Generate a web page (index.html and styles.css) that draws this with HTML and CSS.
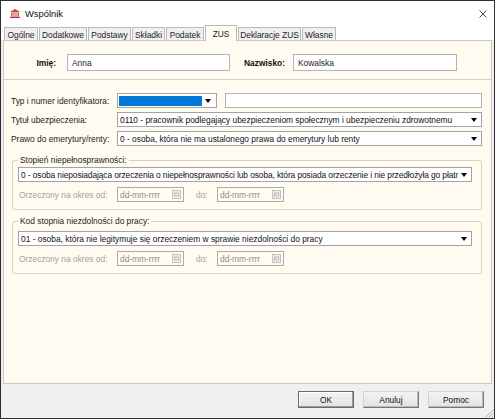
FILE: index.html
```html
<!DOCTYPE html>
<html lang="pl">
<head>
<meta charset="utf-8">
<title>Wspólnik</title>
<link rel="stylesheet" href="styles.css">
</head>
<body>
<div class="window">
  <div class="titlebar">
    <svg class="appicon" viewBox="0 0 10 9" width="10" height="9">
      <path d="M5 0 L10 3 L0 3 Z" fill="#c8473e"/>
      <rect x="1" y="3.5" width="8" height="4" fill="#d9605a"/>
      <rect x="2.5" y="4.2" width="1.2" height="3" fill="#f6d2cf"/>
      <rect x="4.4" y="4.2" width="1.2" height="3" fill="#f6d2cf"/>
      <rect x="6.3" y="4.2" width="1.2" height="3" fill="#f6d2cf"/>
      <rect x="0" y="7.8" width="10" height="1.2" fill="#a83a33"/>
    </svg>
    <span class="title">Wspólnik</span>
    <svg class="close" viewBox="0 0 8 8" width="8" height="8">
      <path d="M0.5 0.5 L7.5 7.5 M7.5 0.5 L0.5 7.5" stroke="#333" stroke-width="0.9" fill="none"/>
    </svg>
  </div>

  <div class="tabs">
    <div class="tab t1">Ogólne</div>
    <div class="tab t2">Dodatkowe</div>
    <div class="tab t3">Podstawy</div>
    <div class="tab t4">Składki</div>
    <div class="tab t5">Podatek</div>
    <div class="tab t6 active">ZUS</div>
    <div class="tab t7">Deklaracje ZUS</div>
    <div class="tab t8">Własne</div>
  </div>

  <div class="panel">
    <div class="hdr">
      <span class="hlabel l1">Imię:</span>
      <div class="input in-imie">Anna</div>
      <span class="hlabel l2">Nazwisko:</span>
      <div class="input in-nazw">Kowalska</div>
    </div>

    <div class="form">
      <div class="row">
        <span class="lbl">Typ i numer identyfikatora:</span>
        <div class="combo combo-id"><span class="bluefill"></span><i class="arrow"></i></div>
        <div class="input small grow"></div>
      </div>
      <div class="row">
        <span class="lbl">Tytuł ubezpieczenia:</span>
        <div class="combo grow"><span class="txt">0110 - pracownik podlegający ubezpieczeniom społecznym i ubezpieczeniu zdrowotnemu</span><i class="arrow"></i></div>
      </div>
      <div class="row">
        <span class="lbl">Prawo do emerytury/renty:</span>
        <div class="combo grow"><span class="txt">0 - osoba, która nie ma ustalonego prawa do emerytury lub renty</span><i class="arrow"></i></div>
      </div>

      <fieldset class="fs fs1">
        <legend>Stopień niepełnosprawności:</legend>
        <div class="combo"><span class="txt tight">0 - osoba nieposiadająca orzeczenia o niepełnosprawności lub osoba, która posiada orzeczenie i nie przedłożyła go płatnikowi składek</span><i class="arrow"></i></div>
        <div class="daterow">
          <span class="dlbl">Orzeczony na okres od:</span>
          <div class="date"><span>dd-mm-rrrr</span><svg class="cal" viewBox="0 0 9 9" width="9" height="9"><rect x="0.5" y="0.5" width="8" height="8" fill="#ededed" stroke="#c4c4c4"/><rect x="2.5" y="3" width="4" height="3" fill="none" stroke="#b0b0b0" stroke-width="0.8"/></svg></div>
          <span class="do">do:</span>
          <div class="date"><span>dd-mm-rrrr</span><svg class="cal" viewBox="0 0 9 9" width="9" height="9"><rect x="0.5" y="0.5" width="8" height="8" fill="#ededed" stroke="#c4c4c4"/><rect x="2.5" y="3" width="4" height="3" fill="none" stroke="#b0b0b0" stroke-width="0.8"/></svg></div>
        </div>
      </fieldset>

      <fieldset class="fs fs2">
        <legend>Kod stopnia niezdolności do pracy:</legend>
        <div class="combo"><span class="txt">01 - osoba, która nie legitymuje się orzeczeniem w sprawie niezdolności do pracy</span><i class="arrow"></i></div>
        <div class="daterow">
          <span class="dlbl">Orzeczony na okres od:</span>
          <div class="date"><span>dd-mm-rrrr</span><svg class="cal" viewBox="0 0 9 9" width="9" height="9"><rect x="0.5" y="0.5" width="8" height="8" fill="#ededed" stroke="#c4c4c4"/><rect x="2.5" y="3" width="4" height="3" fill="none" stroke="#b0b0b0" stroke-width="0.8"/></svg></div>
          <span class="do">do:</span>
          <div class="date"><span>dd-mm-rrrr</span><svg class="cal" viewBox="0 0 9 9" width="9" height="9"><rect x="0.5" y="0.5" width="8" height="8" fill="#ededed" stroke="#c4c4c4"/><rect x="2.5" y="3" width="4" height="3" fill="none" stroke="#b0b0b0" stroke-width="0.8"/></svg></div>
        </div>
      </fieldset>
    </div>
  </div>

  <div class="footer">
    <button class="btn ok">OK</button>
    <button class="btn">Anuluj</button>
    <button class="btn">Pomoc</button>
  </div>

  <svg class="grip" viewBox="0 0 10 10" width="10" height="10">
    <path d="M9.5 1.5 L1.5 9.5 M9.5 4.5 L4.5 9.5 M9.5 7.5 L7.5 9.5" stroke="#a8a8a8" stroke-width="0.9" fill="none"/>
  </svg>
</div>
</body>
</html>
```

FILE: styles.css
```css
* { box-sizing: border-box; }

body {
  margin: 0;
  font-family: "Liberation Sans", Arial, sans-serif;
  font-size: 8.4px;
  color: #1c1c1c;
  background: #ffffff;
}

.window {
  position: relative;
  width: 495px;
  height: 419px;
  border: 1px solid #2f2f2f;
  background: #f0f0f0;
  display: flex;
  flex-direction: column;
}

/* title bar */
.titlebar {
  height: 24px;
  flex: none;
  background: #ffffff;
  display: flex;
  align-items: center;
  padding: 1px 7px 0 9px;
}
.appicon { flex: none; margin-right: 5px; }
.title { font-size: 9.4px; color: #111; flex: 1; }
.close { flex: none; }

/* tabs */
.tabs {
  height: 15px;
  flex: none;
  background: #ffffff;
  display: flex;
  align-items: flex-end;
  padding-left: 3px;
}
.tab {
  height: 13px;
  border: 1px solid #b9b9b9;
  border-bottom: none;
  background: #f0f0f0;
  margin-right: 1px;
  display: flex;
  align-items: center;
  justify-content: center;
  white-space: nowrap;
  color: #1c1c1c;
  padding-top: 1px;
}
.tab.active {
  height: 16px;
  margin-bottom: -1px;
  background: #fffbf0;
  position: relative;
  z-index: 1;
}
.t1 { width: 34px; }
.t2 { width: 48px; }
.t3 { width: 43px; }
.t4 { width: 33px; }
.t5 { width: 38px; }
.t6 { width: 32px; }
.t7 { width: 63px; }
.t8 { width: 34px; }

/* panel */
.panel {
  flex: 1;
  margin: 0 2px;
  border: 1px solid #c8c8c8;
  background: #fffbf0;
  display: flex;
  flex-direction: column;
}

.hdr {
  flex: none;
  display: flex;
  align-items: center;
  padding: 13px 0 8px 0;
  border-bottom: 1px solid #cfcfcf;
}
.hlabel { font-weight: bold; text-align: right; color: #111; }
.l1 { width: 52px; margin-right: 11px; }
.l2 { width: 55px; margin-right: 8px; }

.input {
  height: 17px;
  border: 1px solid #b4b4b4;
  background: #ffffff;
  padding-left: 4px;
  display: flex;
  align-items: center;
  color: #1c1c1c;
}
.input.small { height: 15px; }
.in-imie { width: 163px; }
.in-nazw { width: 164px; }
.grow { flex: 1; }

.form {
  padding: 13px 9px 0 7px;
}
.row {
  display: flex;
  align-items: center;
  height: 15px;
  margin-bottom: 4px;
}
.lbl { width: 106px; flex: none; white-space: nowrap; }

.combo {
  height: 15px;
  border: 1px solid #a3a3a3;
  background: #ffffff;
  display: flex;
  align-items: center;
  padding: 0 4px 0 2px;
  overflow: hidden;
}
.combo .txt {
  flex: 1;
  white-space: nowrap;
  overflow: hidden;
  color: #111;
}
.combo .txt.tight { letter-spacing: -0.09px; }
.combo-id {
  width: 100px;
  flex: none;
  margin-right: 8px;
  padding-left: 1px;
}
.bluefill {
  width: 83px;
  height: 10px;
  background: #0078d7;
  flex: none;
}
.arrow {
  flex: none;
  width: 0;
  height: 0;
  border-left: 3.5px solid transparent;
  border-right: 3.5px solid transparent;
  border-top: 4px solid #000;
  margin-left: 3px;
}

/* fieldsets */
.fs {
  margin: 9px 0 0 1px;
  border: 1px solid #d6d2c6;
  border-radius: 3px;
  padding: 2px 9px 7px 5px;
  min-width: 0;
}
.fs2 {
  margin-top: 6px;
  padding-top: 5px;
}
.fs legend {
  padding: 0 2px;
  line-height: 10px;
  color: #1c1c1c;
}

.daterow {
  display: flex;
  align-items: center;
  height: 15px;
  margin-top: 5px;
}
.dlbl {
  width: 99px;
  flex: none;
  padding-left: 1px;
  color: #a2a2a2;
  white-space: nowrap;
}
.date {
  width: 67px;
  height: 15px;
  flex: none;
  border: 1px solid #ababab;
  display: flex;
  align-items: center;
  justify-content: space-between;
  padding: 0 2px 0 2px;
  color: #8e8e8e;
}
.cal { flex: none; }
.do {
  width: 21px;
  margin-left: 12px;
  flex: none;
  color: #a2a2a2;
}

/* footer */
.footer {
  height: 34px;
  flex: none;
  display: flex;
  justify-content: flex-end;
  align-items: flex-start;
  gap: 9px;
  padding: 7px 10px 0 0;
}
.btn {
  width: 56px;
  height: 17px;
  font-family: "Liberation Sans", Arial, sans-serif;
  font-size: 8.4px;
  color: #111;
  background: linear-gradient(#f3f3f3, #e3e3e3);
  border: 1px solid;
  border-color: #d2d2d2 #777777 #777777 #d2d2d2;
  box-shadow: inset -1px -1px 0 #b9b9b9;
  padding: 0;
}
.btn.ok {
  border-color: #6a6a6a;
  box-shadow: inset -1px -1px 0 #9a9a9a, inset 1px 1px 0 #ffffff;
}

.grip {
  position: absolute;
  right: 0;
  bottom: 0;
}
```
